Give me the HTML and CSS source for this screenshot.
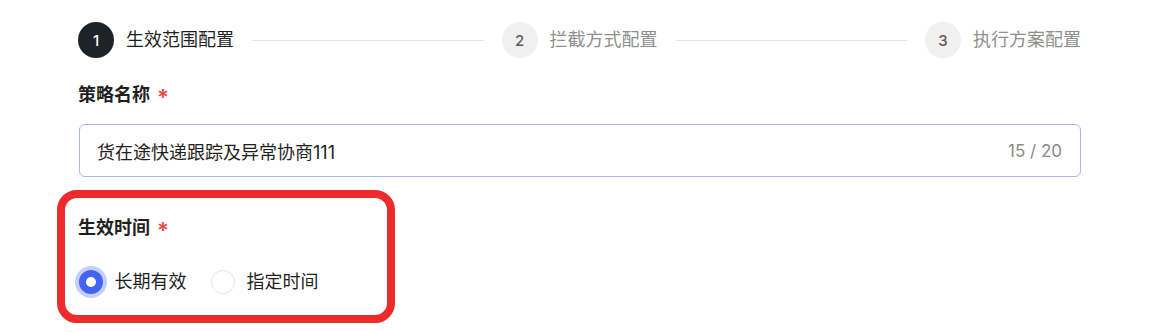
FILE: index.html
```html
<!DOCTYPE html>
<html lang="zh-CN">
<head>
<meta charset="utf-8">
<link rel="stylesheet" href="styles.css">
</head>
<body>
<div class="page">
  <div class="steps">
    <div class="step active"><span class="num">1</span><span class="title">生效范围配置</span></div>
    <div class="line"></div>
    <div class="step"><span class="num">2</span><span class="title">拦截方式配置</span></div>
    <div class="line"></div>
    <div class="step"><span class="num">3</span><span class="title">执行方案配置</span></div>
  </div>

  <div class="label label-name">策略名称<span class="req">*</span></div>
  <div class="input">
    <span class="value">货在途快递跟踪及异常协商111</span>
    <span class="count">15 / 20</span>
  </div>

  <div class="label label-time">生效时间<span class="req">*</span></div>
  <div class="radios">
    <label class="radio checked"><span class="dot"></span><span class="rtext">长期有效</span></label>
    <label class="radio"><span class="dot"></span><span class="rtext">指定时间</span></label>
  </div>

  <div class="highlight"></div>
</div>
</body>
</html>
```

FILE: styles.css
```css
* { box-sizing: border-box; }
html, body {
  margin: 0;
  background: #ffffff;
}
body {
  font-family: Inter, "Noto Sans CJK SC", sans-serif;
  color: #1f1f1f;
}
.page {
  position: relative;
  width: 1152px;
  height: 332px;
  padding: 22px 71px 0 78px;
}
.steps {
  display: flex;
  align-items: center;
  height: 36px;
}
.step {
  display: flex;
  align-items: center;
  gap: 12px;
}
.num {
  width: 36px;
  height: 36px;
  border-radius: 50%;
  background: #f0f0f0;
  color: #5c5c5c;
  font-size: 15px;
  display: flex;
  align-items: center;
  justify-content: center;
  font-weight: 500;
}
.title {
  font-size: 18px;
  line-height: 24px;
  color: #8f8f8f;
}
.step.active .num {
  background: #1e2229;
  color: #ffffff;
}
.step.active .title {
  color: #1f1f1f;
}
.line {
  flex: 1;
  height: 1px;
  background: #e4e4ec;
  margin: 0 18px;
}
.label {
  font-size: 18px;
  line-height: 24px;
  font-weight: 600;
  color: #1f1f1f;
  display: flex;
  align-items: center;
}
.req {
  color: #f04343;
  margin-left: 7px;
  font-size: 22px;
  font-weight: 600;
  line-height: 24px;
  position: relative;
  top: 2px;
}
.label-name { margin-top: 25px; }
.input {
  margin-top: 17px;
  height: 53px;
  border: 1px solid #a6b6f7;
  border-radius: 6px;
  display: flex;
  align-items: center;
  justify-content: space-between;
  padding: 0 18px 0 17px;
  margin-left: 1px;
}
.value {
  font-size: 18px;
  color: #1f1f1f;
}
.count {
  font-size: 17px;
  color: #8a8a8a;
}
.label-time { margin-top: 39px; }
.radios {
  margin-top: 27px;
  height: 30px;
  display: flex;
  align-items: center;
  gap: 24px;
  padding-left: 0.5px;
}
.radio {
  display: flex;
  align-items: center;
  gap: 12px;
}
.dot {
  width: 24px;
  height: 24px;
  border-radius: 50%;
  border: 1px solid #e6e6e6;
  background: #ffffff;
  display: flex;
  align-items: center;
  justify-content: center;
}
.radio.checked .dot {
  border: none;
  background: #4463f2;
  box-shadow: 0 0 0 4px #c4cffb;
}
.radio.checked .dot::after {
  content: "";
  width: 10px;
  height: 10px;
  border-radius: 50%;
  background: #ffffff;
}
.rtext {
  font-size: 18px;
  line-height: 24px;
  color: #1f1f1f;
}
.highlight {
  position: absolute;
  left: 57px;
  top: 190px;
  width: 338px;
  height: 133px;
  border: 8px solid #ee2b2b;
  border-radius: 20px;
}
```
